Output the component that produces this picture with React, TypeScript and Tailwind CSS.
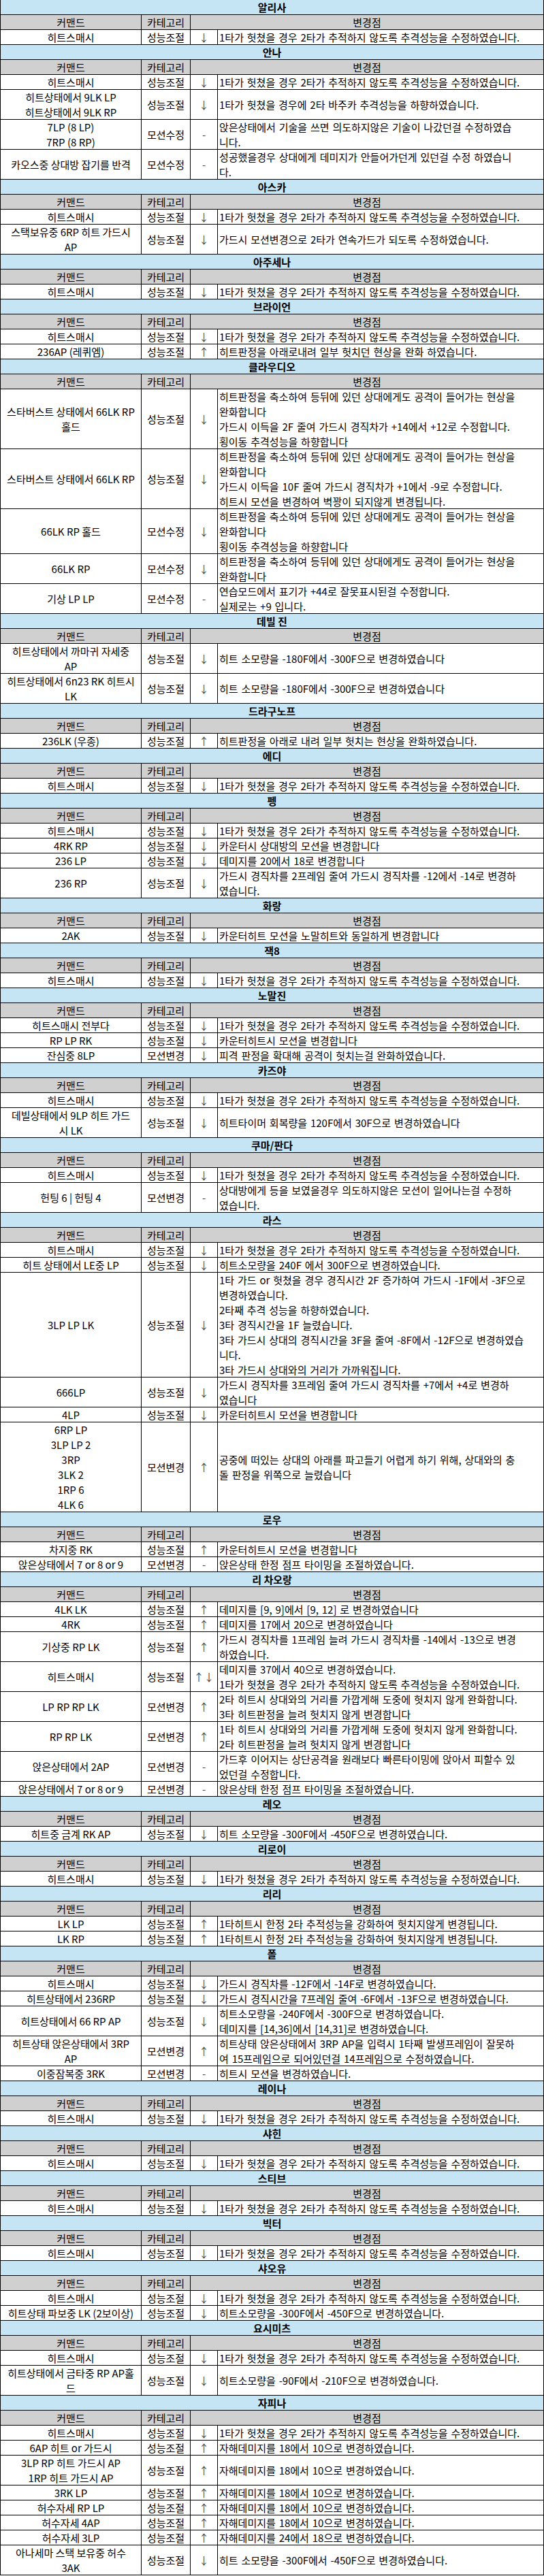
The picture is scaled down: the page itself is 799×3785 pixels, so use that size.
import React from "react"

type Row = { cmd: string[]; cat: string; arrow: string; text: string[] }
type Section = { name: string; rows: Row[] }

const HS = "1타가 헛쳤을 경우 2타가 추적하지 않도록 추격성능을 수정하였습니다."
const hs = (cmd = "히트스매시"): Row => ({ cmd: [cmd], cat: "성능조절", arrow: "↓", text: [HS] })
const HIT_BOX = "히트판정을 축소하여 등뒤에 있던 상대에게도 공격이 들어가는 현상을"
const SELF = "자해데미지를 18에서 10으로 변경하였습니다."

const sections: Section[] = [
  { name: "알리사", rows: [hs()] },
  {
    name: "안나",
    rows: [
      hs(),
      { cmd: ["히트상태에서 9LK LP", "히트상태에서 9LK RP"], cat: "성능조절", arrow: "↓", text: ["1타가 헛쳤을 경우에 2타 바주카 추격성능을 하향하였습니다."] },
      { cmd: ["7LP (8 LP)", "7RP (8 RP)"], cat: "모션수정", arrow: "-", text: ["앉은상태에서 기술을 쓰면 의도하지않은 기술이 나갔던걸 수정하였습", "니다."] },
      { cmd: ["카오스중 상대방 잡기를 반격"], cat: "모션수정", arrow: "-", text: ["성공했을경우 상대에게 데미지가 안들어가던게 있던걸 수정 하였습니", "다."] },
    ],
  },
  {
    name: "아스카",
    rows: [
      hs(),
      { cmd: ["스택보유중 6RP 히트 가드시", "AP"], cat: "성능조절", arrow: "↓", text: ["가드시 모션변경으로 2타가 연속가드가 되도록 수정하였습니다."] },
    ],
  },
  { name: "아주세나", rows: [hs()] },
  {
    name: "브라이언",
    rows: [
      hs(),
      { cmd: ["236AP (레퀴엠)"], cat: "성능조절", arrow: "↑", text: ["히트판정을 아래로내려 일부 헛치던 현상을 완화 하였습니다."] },
    ],
  },
  {
    name: "클라우디오",
    rows: [
      { cmd: ["스타버스트 상태에서 66LK RP", "홀드"], cat: "성능조절", arrow: "↓", text: [HIT_BOX, "완화합니다", "가드시 이득을 2F 줄여 가드시 경직차가 +14에서 +12로 수정합니다.", "횡이동 추격성능을 하향합니다"] },
      { cmd: ["스타버스트 상태에서 66LK RP"], cat: "성능조절", arrow: "↓", text: [HIT_BOX, "완화합니다", "가드시 이득을 10F 줄여 가드시 경직차가 +1에서 -9로 수정합니다.", "히트시 모션을 변경하여 벽꽝이 되지않게 변경됩니다."] },
      { cmd: ["66LK RP 홀드"], cat: "모션수정", arrow: "↓", text: [HIT_BOX, "완화합니다", "횡이동 추격성능을 하향합니다"] },
      { cmd: ["66LK RP"], cat: "모션수정", arrow: "↓", text: [HIT_BOX, "완화합니다"] },
      { cmd: ["기상 LP LP"], cat: "모션수정", arrow: "-", text: ["연습모드에서 표기가 +44로 잘못표시된걸 수정합니다.", "실제로는 +9 입니다."] },
    ],
  },
  {
    name: "데빌 진",
    rows: [
      { cmd: ["히트상태에서 까마귀 자세중", "AP"], cat: "성능조절", arrow: "↓", text: ["히트 소모량을 -180F에서 -300F으로 변경하였습니다"] },
      { cmd: ["히트상태에서 6n23 RK 히트시", "LK"], cat: "성능조절", arrow: "↓", text: ["히트 소모량을 -180F에서 -300F으로 변경하였습니다"] },
    ],
  },
  {
    name: "드라구노프",
    rows: [{ cmd: ["236LK (우종)"], cat: "성능조절", arrow: "↑", text: ["히트판정을 아래로 내려 일부 헛치는 현상을 완화하였습니다."] }],
  },
  { name: "에디", rows: [hs()] },
  {
    name: "펭",
    rows: [
      hs(),
      { cmd: ["4RK RP"], cat: "성능조절", arrow: "↓", text: ["카운터시 상대방의 모션을 변경합니다"] },
      { cmd: ["236 LP"], cat: "성능조절", arrow: "↓", text: ["데미지를 20에서 18로 변경합니다"] },
      { cmd: ["236 RP"], cat: "성능조절", arrow: "↓", text: ["가드시 경직차를 2프레임 줄여 가드시 경직차를 -12에서 -14로 변경하", "였습니다."] },
    ],
  },
  {
    name: "화랑",
    rows: [{ cmd: ["2AK"], cat: "성능조절", arrow: "↓", text: ["카운터히트 모션을 노말히트와 동일하게 변경합니다"] }],
  },
  { name: "잭8", rows: [hs()] },
  {
    name: "노말진",
    rows: [
      hs("히트스매시 전부다"),
      { cmd: ["RP LP RK"], cat: "성능조절", arrow: "↓", text: ["카운터히트시 모션을 변경합니다"] },
      { cmd: ["잔심중 8LP"], cat: "모션변경", arrow: "↓", text: ["피격 판정을 확대해 공격이 헛치는걸 완화하였습니다."] },
    ],
  },
  {
    name: "카즈야",
    rows: [
      hs(),
      { cmd: ["데빌상태에서 9LP 히트 가드", "시 LK"], cat: "성능조절", arrow: "↓", text: ["히트타이머 회복량을 120F에서 30F으로 변경하였습니다"] },
    ],
  },
  {
    name: "쿠마/판다",
    rows: [
      hs(),
      { cmd: ["헌팅 6 | 헌팅 4"], cat: "모션변경", arrow: "-", text: ["상대방에게 등을 보였을경우 의도하지않은 모션이 일어나는걸 수정하", "였습니다."] },
    ],
  },
  {
    name: "라스",
    rows: [
      hs(),
      { cmd: ["히트 상태에서 LE중 LP"], cat: "성능조절", arrow: "↓", text: ["히트소모량을 240F 에서 300F으로 변경하였습니다."] },
      {
        cmd: ["3LP LP LK"],
        cat: "성능조절",
        arrow: "↓",
        text: [
          "1타 가드 or 헛쳤을 경우 경직시간 2F 증가하여 가드시 -1F에서 -3F으로",
          "변경하였습니다.",
          "2타째 추격 성능을 하향하였습니다.",
          "3타 경직시간을 1F 늘렸습니다.",
          "3타 가드시 상대의 경직시간을 3F을 줄여 -8F에서 -12F으로 변경하였습",
          "니다.",
          "3타 가드시 상대와의 거리가 가까워집니다.",
        ],
      },
      { cmd: ["666LP"], cat: "성능조절", arrow: "↓", text: ["가드시 경직차를 3프레임 줄여 가드시 경직차를 +7에서 +4로 변경하", "였습니다"] },
      { cmd: ["4LP"], cat: "성능조절", arrow: "↓", text: ["카운터히트시 모션을 변경합니다"] },
      {
        cmd: ["6RP LP", "3LP LP 2", "3RP", "3LK 2", "1RP 6", "4LK 6"],
        cat: "모션변경",
        arrow: "↑",
        text: ["공중에 떠있는 상대의 아래를 파고들기 어렵게 하기 위해, 상대와의 충", "돌 판정을 위쪽으로 늘렸습니다"],
      },
    ],
  },
  {
    name: "로우",
    rows: [
      { cmd: ["차지중 RK"], cat: "성능조절", arrow: "↑", text: ["카운터히트시 모션을 변경합니다"] },
      { cmd: ["앉은상태에서 7 or 8 or 9"], cat: "모션변경", arrow: "-", text: ["앉은상태 한정 점프 타이밍을 조절하였습니다."] },
    ],
  },
  {
    name: "리 차오랑",
    rows: [
      { cmd: ["4LK LK"], cat: "성능조절", arrow: "↑", text: ["데미지를 [9, 9]에서 [9, 12] 로 변경하였습니다"] },
      { cmd: ["4RK"], cat: "성능조절", arrow: "↑", text: ["데미지를 17에서 20으로 변경하였습니다"] },
      { cmd: ["기상중 RP LK"], cat: "성능조절", arrow: "↑", text: ["가드시 경직차를 1프레임 늘려 가드시 경직차를 -14에서 -13으로 변경", "하였습니다."] },
      { cmd: ["히트스매시"], cat: "성능조절", arrow: "↑↓", text: ["데미지를 37에서 40으로 변경하였습니다.", HS] },
      { cmd: ["LP RP RP LK"], cat: "모션변경", arrow: "↑", text: ["2타 히트시 상대와의 거리를 가깝게해 도중에 헛치지 않게 완화합니다.", "3타 히트판정을 늘려 헛치지 않게 변경합니다"] },
      { cmd: ["RP RP LK"], cat: "모션변경", arrow: "↑", text: ["1타 히트시 상대와의 거리를 가깝게해 도중에 헛치지 않게 완화합니다.", "2타 히트판정을 늘려 헛치지 않게 변경합니다"] },
      { cmd: ["앉은상태에서 2AP"], cat: "모션변경", arrow: "-", text: ["가드후 이어지는 상단공격을 원래보다 빠른타이밍에 앉아서 피할수 있", "었던걸 수정합니다."] },
      { cmd: ["앉은상태에서 7 or 8 or 9"], cat: "모션변경", arrow: "-", text: ["앉은상태 한정 점프 타이밍을 조절하였습니다."] },
    ],
  },
  {
    name: "레오",
    rows: [{ cmd: ["히트중 금계 RK AP"], cat: "성능조절", arrow: "↓", text: ["히트 소모량을 -300F에서 -450F으로 변경하였습니다."] }],
  },
  { name: "리로이", rows: [hs()] },
  {
    name: "리리",
    rows: [
      { cmd: ["LK LP"], cat: "성능조절", arrow: "↑", text: ["1타히트시 한정 2타 추적성능을 강화하여 헛치지않게 변경됩니다."] },
      { cmd: ["LK RP"], cat: "성능조절", arrow: "↑", text: ["1타히트시 한정 2타 추적성능을 강화하여 헛치지않게 변경됩니다."] },
    ],
  },
  {
    name: "폴",
    rows: [
      { cmd: ["히트스매시"], cat: "성능조절", arrow: "↓", text: ["가드시 경직차를 -12F에서 -14F로 변경하였습니다."] },
      { cmd: ["히트상태에서 236RP"], cat: "성능조절", arrow: "↓", text: ["가드시 경직시간을 7프레임 줄여 -6F에서 -13F으로 변경하였습니다."] },
      { cmd: ["히트상태에서 66 RP AP"], cat: "성능조절", arrow: "↓", text: ["히트소모량을 -240F에서 -300F으로 변경하였습니다.", "데미지를 [14,36]에서 [14,31]로 변경하였습니다."] },
      { cmd: ["히트상태 앉은상태에서 3RP", "AP"], cat: "모션변경", arrow: "↑", text: ["히트상태 앉은상태에서 3RP AP을 입력시 1타째 발생프레임이 잘못하", "여 15프레임으로 되어있던걸 14프레임으로 수정하였습니다."] },
      { cmd: ["이중잠복중 3RK"], cat: "모션변경", arrow: "-", text: ["히트시 모션을 변경하였습니다."] },
    ],
  },
  { name: "레이나", rows: [hs()] },
  { name: "샤힌", rows: [hs()] },
  { name: "스티브", rows: [hs()] },
  { name: "빅터", rows: [hs()] },
  {
    name: "샤오유",
    rows: [
      hs(),
      { cmd: ["히트상태 파보중 LK (2보이상)"], cat: "성능조절", arrow: "↓", text: ["히트소모량을 -300F에서 -450F으로 변경하였습니다."] },
    ],
  },
  {
    name: "요시미츠",
    rows: [
      hs(),
      { cmd: ["히트상태에서 금타중 RP AP홀", "드"], cat: "성능조절", arrow: "↓", text: ["히트소모량을 -90F에서 -210F으로 변경하였습니다."] },
    ],
  },
  {
    name: "자피나",
    rows: [
      hs(),
      { cmd: ["6AP 히트 or 가드시"], cat: "성능조절", arrow: "↑", text: [SELF] },
      { cmd: ["3LP RP 히트 가드시 AP", "1RP 히트 가드시 AP"], cat: "성능조절", arrow: "↑", text: [SELF] },
      { cmd: ["3RK LP"], cat: "성능조절", arrow: "↑", text: [SELF] },
      { cmd: ["허수자세 RP LP"], cat: "성능조절", arrow: "↑", text: [SELF] },
      { cmd: ["허수자세 4AP"], cat: "성능조절", arrow: "↑", text: [SELF] },
      { cmd: ["허수자세 3LP"], cat: "성능조절", arrow: "↑", text: ["자해데미지를 24에서 18으로 변경하였습니다."] },
      { cmd: ["아나세마 스택 보유중 허수", "3AK"], cat: "성능조절", arrow: "↓", text: ["히트 소모량을 -300F에서 -450F으로 변경하였습니다."] },
    ],
  },
]

function Lines({ lines }: { lines: string[] }) {
  return (
    <div>
      {lines.map((l, i) => (
        <div key={i} className="h-[22px] leading-[22px] whitespace-nowrap">
          {l}
        </div>
      ))}
    </div>
  )
}

function DataRow({ row }: { row: Row }) {
  const n = Math.max(row.cmd.length, row.text.length)
  return (
    <div className="flex border-b border-black bg-white" style={{ height: n * 22 }}>
      <div className="w-[207px] shrink-0 border-r border-black flex items-center justify-center text-center">
        <Lines lines={row.cmd} />
      </div>
      <div className="w-[72px] shrink-0 border-r border-black flex items-center justify-center">{row.cat}</div>
      <div className="w-[40px] shrink-0 border-r border-black flex items-center justify-center text-[#444]">
        {row.arrow}
      </div>
      <div className="flex-1 border-r border-black flex items-center pl-[2px] overflow-hidden [word-spacing:1.5px]">
        <Lines lines={row.text} />
      </div>
    </div>
  )
}

function SectionBlock({ section }: { section: Section }) {
  return (
    <div>
      <div className="h-[22px] border-b border-r border-black bg-[#c5e4f4] flex items-center justify-center font-bold">
        {section.name}
      </div>
      <div className="h-[22px] flex border-b border-black bg-[#d0d0d0]">
        <div className="w-[207px] shrink-0 border-r border-black flex items-center justify-center">커맨드</div>
        <div className="w-[72px] shrink-0 border-r border-black flex items-center justify-center">카테고리</div>
        <div className="flex-1 border-r border-black flex items-center justify-center">변경점</div>
      </div>
      {section.rows.map((r, i) => (
        <DataRow key={i} row={r} />
      ))}
    </div>
  )
}

export default function App() {
  return (
    <div
      className="w-[799px] border-l border-black bg-white text-black text-[15px] leading-[22px]"
      style={{ fontFamily: '"Noto Sans CJK KR", "Noto Sans", sans-serif' }}
    >
      {sections.map((s) => (
        <SectionBlock key={s.name} section={s} />
      ))}
    </div>
  )
}
